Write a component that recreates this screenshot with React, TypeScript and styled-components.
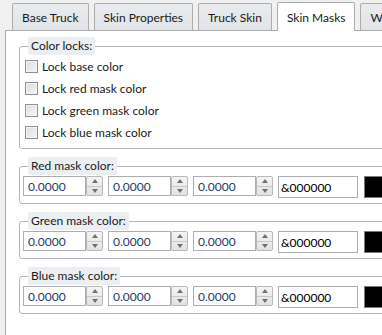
import React, { FC } from 'react';
import styled, { createGlobalStyle } from 'styled-components';

const GlobalStyle = createGlobalStyle`
    html, body {
        margin: 0;
        padding: 0;
        background: #f0f0f0;
        overflow: hidden;
    }
    body {
        font-family: Lato, 'Noto Sans', 'Liberation Sans', sans-serif;
        font-size: 12px;
        color: #1a1a1a;
    }
`;

const Window = styled.div`
    width: 382px;
    height: 335px;
    overflow: hidden;
    display: flex;
    flex-direction: column;
`;

const TabStrip = styled.div`
    height: 30px;
    flex: none;
    display: flex;
    align-items: flex-end;
    gap: 5px;
    padding-left: 12px;
`;

const Tab = styled.div<{ $active?: boolean }>`
    position: relative;
    flex: none;
    box-sizing: border-box;
    height: ${(p) => (p.$active ? '29px' : '27px')};
    margin-bottom: ${(p) => (p.$active ? '-1px' : '0')};
    padding: 0 9px;
    display: flex;
    align-items: center;
    border: 1px solid #acacac;
    border-bottom: none;
    border-radius: 2px 2px 0 0;
    background: ${(p) => (p.$active ? '#ffffff' : 'linear-gradient(#e9ebee, #e1e4e8)')};
    z-index: ${(p) => (p.$active ? 1 : 0)};
    white-space: nowrap;
`;

const Pane = styled.div`
    flex: 1;
    width: 420px;
    margin-left: 5px;
    border-top: 1px solid #acacac;
    border-left: 1px solid #acacac;
    background: #ffffff;
    padding: 6px 0 0 13px;
`;

const Group = styled.fieldset`
    margin: 0;
    padding: 0;
    min-width: 0;
    border: 1px solid #b3b7bb;
    border-radius: 3px;

    & + & {
        margin-top: 8px;
    }
`;

const Legend = styled.legend`
    margin-left: 8px;
    padding: 0 3px;
    height: 18px;
    line-height: 18px;
    background: #eceff2;
    border-radius: 2px;
`;

const LockList = styled.div`
    padding: 0 5px 5px;
`;

const LockRow = styled.label`
    height: 22px;
    display: flex;
    align-items: center;
    gap: 4px;
`;

const CheckBox = styled.span`
    width: 13px;
    height: 13px;
    box-sizing: border-box;
    border: 1px solid #8f8f8f;
    background: linear-gradient(135deg, #dcdcdc, #f6f6f6);
    box-shadow: inset 0 0 0 1px #f4f4f4;
`;

const ColorRow = styled.div`
    display: flex;
    align-items: flex-start;
    gap: 5px;
    padding: 1px 3px 5px;
`;

const Spin = styled.div`
    width: 80px;
    height: 20px;
    display: flex;
    flex: none;
`;

const SpinField = styled.div`
    flex: 1;
    box-sizing: border-box;
    border: 1px solid #abadb3;
    padding-left: 4px;
    display: flex;
    align-items: center;
    color: #1f3a6a;
    background: #fff;
`;

const SpinButtons = styled.div`
    width: 17px;
    box-sizing: border-box;
    display: flex;
    flex-direction: column;
    border: 1px solid #b8b8b8;
    border-radius: 2px;
    background: linear-gradient(#f4f4f4, #e2e2e2);
`;

const SpinHalf = styled.div<{ $down?: boolean }>`
    flex: 1;
    display: flex;
    align-items: center;
    justify-content: center;
    border-top: ${(p) => (p.$down ? '1px solid #c8c8c8' : 'none')};

    &::after {
        content: '';
        width: 0;
        height: 0;
        border-left: 3.5px solid transparent;
        border-right: 3.5px solid transparent;
        ${(p) => (p.$down ? 'border-top: 4px solid #707070;' : 'border-bottom: 4px solid #707070;')}
    }
`;

const HexField = styled.div`
    width: 80px;
    height: 22px;
    flex: none;
    box-sizing: border-box;
    border: 1px solid #abadb3;
    padding-left: 2px;
    display: flex;
    align-items: center;
    color: #000;
`;

const Swatch = styled.div`
    width: 22px;
    height: 22px;
    margin-left: 1px;
    flex: none;
    box-sizing: border-box;
    border: 1px solid #7a7a7a;
    background: #000;
`;

const tabs = ['Base Truck', 'Skin Properties', 'Truck Skin', 'Skin Masks', 'Wear'];
const locks = ['Lock base color', 'Lock red mask color', 'Lock green mask color', 'Lock blue mask color'];
const masks = ['Red', 'Green', 'Blue'];

const SpinBox: FC<{ value: string }> = ({ value }) => (
    <Spin>
        <SpinField>{value}</SpinField>
        <SpinButtons>
            <SpinHalf />
            <SpinHalf $down />
        </SpinButtons>
    </Spin>
);

export default function App() {
    return (
        <Window>
            <GlobalStyle />
            <TabStrip>
                {tabs.map((t) => (
                    <Tab key={t} $active={t === 'Skin Masks'}>
                        {t}
                    </Tab>
                ))}
            </TabStrip>
            <Pane>
                <Group>
                    <Legend>Color locks:</Legend>
                    <LockList>
                        {locks.map((l) => (
                            <LockRow key={l}>
                                <CheckBox />
                                {l}
                            </LockRow>
                        ))}
                    </LockList>
                </Group>
                {masks.map((m) => (
                    <Group key={m}>
                        <Legend>{m} mask color:</Legend>
                        <ColorRow>
                            <SpinBox value="0.0000" />
                            <SpinBox value="0.0000" />
                            <SpinBox value="0.0000" />
                            <HexField>&amp;000000</HexField>
                            <Swatch />
                        </ColorRow>
                    </Group>
                ))}
            </Pane>
        </Window>
    );
}
